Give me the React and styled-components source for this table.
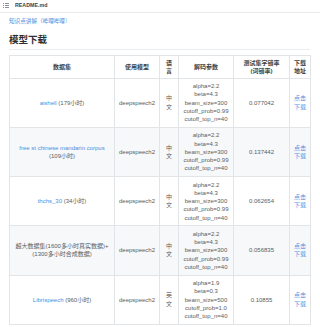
import React from "react";
import styled, { createGlobalStyle } from "styled-components";

const Global = createGlobalStyle`
  html, body { margin: 0; padding: 0; background: #fff; }
  body { font-family: "Liberation Sans", "Noto Sans CJK SC", sans-serif; color: #555; }
`;

const TopBar = styled.div`
  display: flex;
  align-items: center;
  gap: 6px;
  height: 13px;
  padding: 0 0 1px 3px;
  box-sizing: border-box;
  border-bottom: 1px solid #e8eaed;
`;

const FileName = styled.span`
  font-size: 5.3px;
  font-weight: 600;
  color: #3a3f45;
  line-height: 1;
`;

const Content = styled.div`
  padding: 0 10px 0 9px;
`;

const TopLink = styled.a`
  display: block;
  margin-top: 4px;
  font-size: 5.6px;
  line-height: 8px;
  color: #4a8fe0;
  text-decoration: none;
`;

const Heading = styled.h2`
  margin: 8px 0 0;
  padding-bottom: 2px;
  font-size: 9.5px;
  line-height: 14px;
  font-weight: 700;
  color: #2b2f33;
  border-bottom: 1px solid #eceef1;
`;

const Table = styled.table`
  margin-top: 5px;
  width: 301px;
  border-collapse: collapse;
  table-layout: fixed;
  font-size: 6px;
  line-height: 8.25px;
`;

const Col = styled.col`
  width: ${(p) => p.$w}px;
`;

const Row = styled.tr`
  background: ${(p) => (p.$alt ? "#f6f8fa" : "#fff")};
`;

const Th = styled.th`
  border: 1px solid #e2e5e8;
  padding: 2.5px 4px;
  font-weight: 600;
  color: #3a3f45;
  text-align: center;
  vertical-align: middle;
  white-space: nowrap;
`;

const Td = styled.td`
  border: 1px solid #e2e5e8;
  padding: 3.5px 4px;
  color: #5a5d61;
  text-align: center;
  vertical-align: middle;
  white-space: nowrap;
`;

const Link = styled.a`
  color: #4a8fe0;
  text-decoration: none;
`;

const ListIcon = () => (
  <svg width="6" height="5" viewBox="0 0 6 5" fill="#8a9097">
    <rect x="0" y="0" width="1" height="1" />
    <rect x="0" y="2" width="1" height="1" />
    <rect x="0" y="4" width="1" height="1" />
    <rect x="2" y="0" width="4" height="1" />
    <rect x="2" y="2" width="4" height="1" />
    <rect x="2" y="4" width="4" height="1" />
  </svg>
);

const rows = [
  {
    name: <><Link href="#">aishell</Link> (179小时)</>,
    lang: "中文",
    params: ["alpha=2.2", "beta=4.3", "beam_size=300", "cutoff_prob=0.99", "cutoff_top_n=40"],
    score: "0.077042",
  },
  {
    name: <><Link href="#">free st chinese mandarin corpus</Link><br />(109小时)</>,
    lang: "中文",
    params: ["alpha=2.2", "beta=4.3", "beam_size=300", "cutoff_prob=0.99", "cutoff_top_n=40"],
    score: "0.137442",
  },
  {
    name: <><Link href="#">thchs_30</Link> (34小时)</>,
    lang: "中文",
    params: ["alpha=2.2", "beta=4.3", "beam_size=300", "cutoff_prob=0.99", "cutoff_top_n=40"],
    score: "0.062654",
  },
  {
    name: <>超大数据集(1600多小时真实数据)+<br />(1300多小时合成数据)</>,
    lang: "中文",
    params: ["alpha=2.2", "beta=4.3", "beam_size=300", "cutoff_prob=0.99", "cutoff_top_n=40"],
    score: "0.056835",
  },
  {
    name: <><Link href="#">Librispeech</Link> (960小时)</>,
    lang: "英文",
    params: ["alpha=1.9", "beta=0.3", "beam_size=500", "cutoff_prob=1.0", "cutoff_top_n=40"],
    score: "0.10855",
  },
];

const widths = [105, 45, 19, 55, 56, 21];

export default function App() {
  return (
    <>
      <Global />
      <TopBar>
        <ListIcon />
        <FileName>README.md</FileName>
      </TopBar>
      <Content>
        <TopLink href="#">知识点讲解（哔哩哔哩）</TopLink>
        <Heading>模型下载</Heading>
        <Table>
          <colgroup>
            {widths.map((w, i) => (
              <Col key={i} $w={w} />
            ))}
          </colgroup>
          <thead>
            <Row>
              <Th>数据集</Th>
              <Th>使用模型</Th>
              <Th>语<br />言</Th>
              <Th>解码参数</Th>
              <Th>测试集字错率<br />(词错率)</Th>
              <Th>下载<br />地址</Th>
            </Row>
          </thead>
          <tbody>
            {rows.map((r, i) => (
              <Row key={i} $alt={i % 2 === 1}>
                <Td>{r.name}</Td>
                <Td>deepspeech2</Td>
                <Td>{r.lang[0]}<br />{r.lang[1]}</Td>
                <Td>
                  {r.params.map((p, j) => (
                    <React.Fragment key={j}>
                      {j > 0 && <br />}
                      {p}
                    </React.Fragment>
                  ))}
                </Td>
                <Td>{r.score}</Td>
                <Td>
                  <Link href="#">点击<br />下载</Link>
                </Td>
              </Row>
            ))}
          </tbody>
        </Table>
      </Content>
    </>
  );
}
